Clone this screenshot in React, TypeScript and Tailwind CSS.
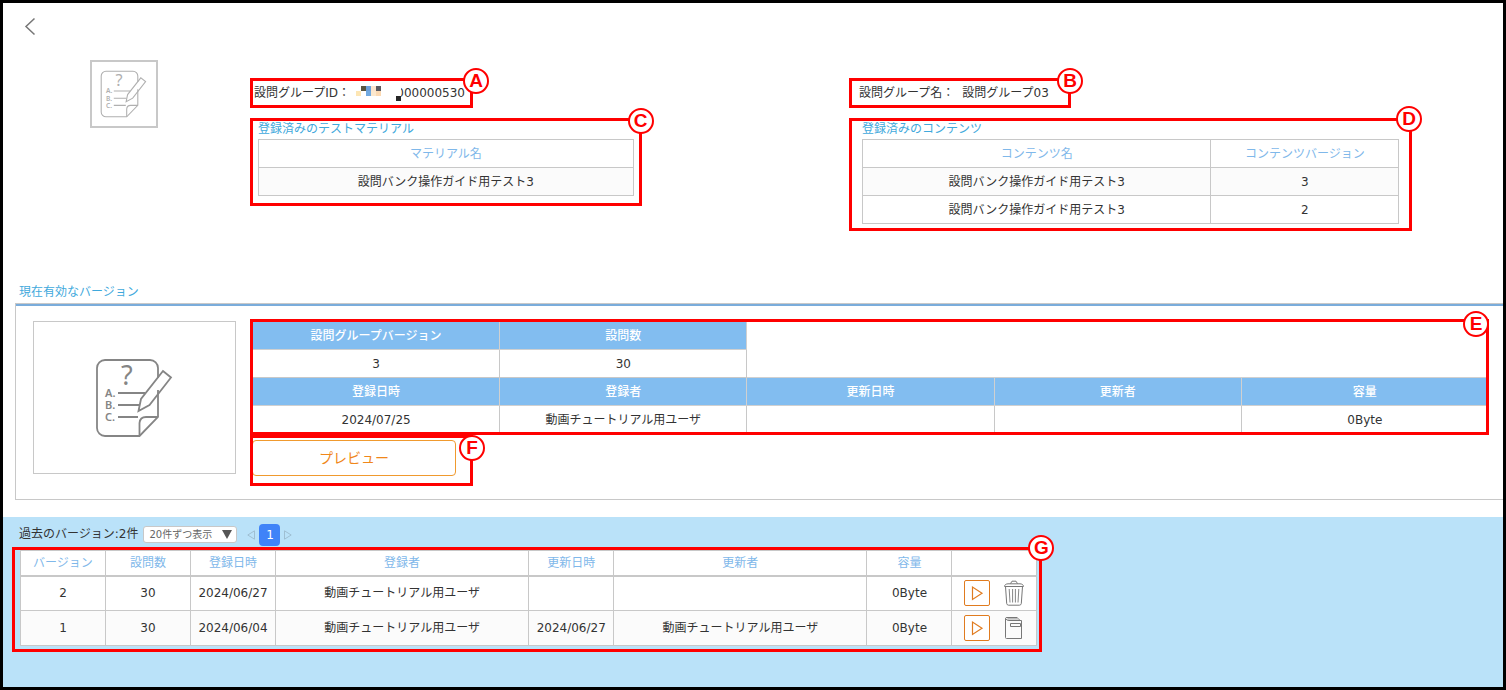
import type { ReactNode } from "react";

function Marked({ label, badge, className, children }: { label: string; badge: string; className: string; children: ReactNode }) {
  return (
    <div className={`relative ${className}`}>
      {children}
      <div className="pointer-events-none absolute inset-0 border-[3px] border-[#ff0000]" />
      <span
        className={`absolute flex h-[26px] w-[26px] items-center justify-center rounded-full border-2 border-[#ff0000] bg-white pb-0.5 font-['Liberation_Sans',sans-serif] text-[19px] leading-none font-bold text-[#ff0000] ${badge}`}
      >
        {label}
      </span>
    </div>
  );
}

function QuestionSheet({ className }: { className: string }) {
  return (
    <svg viewBox="0 0 80 80" className={`overflow-visible ${className}`} fill="none" stroke="currentColor" strokeWidth="1.8" aria-hidden="true">
      <path d="M63 20V10A8 8 0 0 0 55 2H10A8 8 0 0 0 2 10V70A8 8 0 0 0 10 78H44.500L63 59V32" />
      <path d="M44.500 78V65Q45 59 51 59H63" />
      <path d="M43.500 53L46 41L68 13L76 19.500L54.500 47Z" />
      <path d="M23 35H50M23 47H44M23 59H43" />
      <g fill="currentColor" stroke="none" fontFamily="Noto Sans, sans-serif">
        <text x="26" y="27" fontSize="27">?</text>
        <g fontSize="11" fontWeight="600">
          <text x="10" y="39">A.</text>
          <text x="10" y="51">B.</text>
          <text x="10" y="63">C.</text>
        </g>
      </g>
    </svg>
  );
}

function PlayButton({ version }: { version: string }) {
  return (
    <button type="button" aria-label={`バージョン${version}をプレビュー`} className="flex h-[26px] w-[26px] items-center justify-center rounded-[2px] border border-[#e07b1f] bg-white text-[#e07b1f]">
      <svg viewBox="0 0 24 24" className="h-6 w-6" fill="none" stroke="currentColor" strokeWidth="1.2" aria-hidden="true">
        <path d="M7.500 6V18.500L17 12.300Z" />
      </svg>
    </button>
  );
}

function TrashIcon() {
  return (
    <svg viewBox="0 0 20 26" className="h-[26px] w-5 text-[#777777]" fill="none" stroke="currentColor" strokeWidth="1" aria-hidden="true">
      <path d="M.6 6.500C.6 4.500 2 4 4 3.800H16C18 4 19.400 4.500 19.400 6.500Z" />
      <path d="M6.500 3.600L8 1.200H12L13.500 3.600" />
      <path d="M1.500 6.500L2.700 23.500Q3 25.200 4.600 25.200H15.400Q17 25.200 17.300 23.500L18.500 6.500" />
      <path d="M5.200 9L6 22.500M8.600 9V22.500M11.400 9V22.500M14.800 9L14 22.500" strokeWidth=".9" />
    </svg>
  );
}

function BookIcon() {
  return (
    <svg viewBox="0 0 20 26" className="h-[26px] w-5 text-[#777777]" fill="none" stroke="currentColor" strokeWidth="1" aria-hidden="true">
      <path d="M1.500 3.500V22.500Q1.500 23.500 2.500 23.500H17.500V5.500H5Q2.500 5.500 1.500 3.500Q1.500 2.500 3 2.500H13.500" />
      <path d="M3.500 3.900H15L15.500 5" strokeWidth=".8" />
      <path d="M6.500 8.500H16.500V11.500H6.500Z" />
    </svg>
  );
}

const linedTable = "w-full table-fixed border-collapse text-center";
const listHead = "h-[28px] border border-[#c8c8c8] bg-white p-0 font-normal text-[#7fb8ea]";
const listCell = "h-[28px] border border-[#c8c8c8] p-0";
const blueHead = "h-[28px] border border-[#d0d0d0] bg-[#82bdf0] p-0 font-medium text-white";
const plainCell = "h-[28px] border border-[#c8c8c8] bg-white p-0";
const pastHead = "h-[25px] border border-b-2 border-[#c8c8c8] bg-white p-0 font-normal text-[#7fb8ea]";

const pastVersions = [
  { version: "2", count: "30", created: "2024/06/27", creator: "動画チュートリアル用ユーザ", updated: "", updater: "", size: "0Byte" },
  { version: "1", count: "30", created: "2024/06/04", creator: "動画チュートリアル用ユーザ", updated: "2024/06/27", updater: "動画チュートリアル用ユーザ", size: "0Byte" },
];

export default function App() {
  return (
    <main className="flex min-h-screen flex-col border-[3px] border-black bg-white font-['DejaVu_Sans','Noto_Sans_CJK_JP',sans-serif] text-[12px] leading-[18px] text-[#333333]">
      <header className="flex h-[57px] px-5 pt-3">
        <button type="button" aria-label="戻る" className="h-6 w-4">
          <svg viewBox="0 0 16 24" className="h-6 w-4" fill="none" stroke="#777777" strokeWidth="1.5" aria-hidden="true">
            <path d="M11.500 3.500L3 11.500L11.500 19.500" />
          </svg>
        </button>
      </header>

      <section className="grid grid-cols-[247px_599fr_654fr]">
        <div className="pl-[87px]">
          <div className="flex h-[68px] w-[68px] items-center justify-center border-2 border-[#c8c8c8] text-[#b0b0b0]">
            <QuestionSheet className="h-12 w-12" />
          </div>
        </div>

        <div className="flex flex-col gap-[10px] pt-[18px]">
          <Marked label="A" badge="-top-2.5 -right-4" className="h-[30px] w-[223px] pt-1.5 pl-1">
            <div className="flex items-center whitespace-nowrap">
              <span>設問グループID：</span>
              <svg viewBox="0 0 46 16" className="relative z-10 -mr-[5px] ml-auto h-4 w-[46px] shrink-0" shapeRendering="crispEdges" aria-hidden="true">
                <path fill="#ffffff" d="M0 0H46V16H0Z" />
                <path fill="#5a563f" d="M6 1h5v5h-5Z" />
                <path fill="#6c9fd8" d="M11 1h5v5h-5Z" />
                <path fill="#fbe3cc" d="M16 1h5v5h-5Z" />
                <path fill="#5a5a60" d="M21 1h5v5h-5Z" />
                <path fill="#fde6b4" d="M1 6h5v5h-5Z" />
                <path fill="#71a9e0" d="M11 6h5v5h-5Z" />
                <path fill="#fbe8cf" d="M16 6h5v5h-5Z" />
                <path fill="#fbd9b3" d="M21 6h5v5h-5Z" />
                <path fill="#262626" d="M41 11h5v5h-5Z" />
              </svg>
              <span className="pr-2">000000530</span>
            </div>
          </Marked>
          <Marked label="C" badge="-top-2.5 -right-3" className="w-[65.4%] px-2 pt-[2px] pb-2.5">
            <h2 className="h-[19px] font-normal text-[#3fa9dc]">登録済みのテストマテリアル</h2>
            <table className={linedTable}>
              <thead>
                <tr><th className={listHead}>マテリアル名</th></tr>
              </thead>
              <tbody>
                <tr className="bg-[#fbfbfb]"><td className={listCell}>設問バンク操作ガイド用テスト3</td></tr>
              </tbody>
            </table>
          </Marked>
        </div>

        <div className="flex flex-col gap-[10px] pt-[18px]">
          <Marked label="B" badge="-top-2.5 -right-3" className="h-[30px] w-[222px] pt-1.5 pl-2.5">
            <div className="flex gap-2 whitespace-nowrap">
              <span>設問グループ名：</span>
              <span>設問グループ03</span>
            </div>
          </Marked>
          <Marked label="D" badge="-top-3 -right-2.5" className="w-[86.1%] px-[13px] pt-[2px] pb-[7px]">
            <h2 className="h-[19px] font-normal text-[#3fa9dc]">登録済みのコンテンツ</h2>
            <table className={linedTable}>
              <thead>
                <tr>
                  <th className={`${listHead} w-[65%]`}>コンテンツ名</th>
                  <th className={listHead}>コンテンツバージョン</th>
                </tr>
              </thead>
              <tbody>
                <tr className="bg-[#fbfbfb]">
                  <td className={listCell}>設問バンク操作ガイド用テスト3</td>
                  <td className={listCell}>3</td>
                </tr>
                <tr>
                  <td className={listCell}>設問バンク操作ガイド用テスト3</td>
                  <td className={listCell}>2</td>
                </tr>
              </tbody>
            </table>
          </Marked>
        </div>
      </section>

      <section className="mt-[52px]">
        <h2 className="pb-[2px] pl-4 font-normal text-[#3fa9dc]">現在有効なバージョン</h2>
        <div className="ml-3 border-t border-b border-l border-[#c8c8c8]">
          <div className="flex border-t-2 border-[#7aacdb] pt-[13px] pr-3.5 pb-[13px] pl-[17px]">
            <div className="mt-[2px] mr-3.5 flex h-[153px] w-[203px] shrink-0 items-center justify-center border border-[#c8c8c8] text-[#858585]">
              <QuestionSheet className="h-20 w-20" />
            </div>
            <div className="flex-1">
              <Marked label="E" badge="-top-2 right-0" className="h-[116px] pt-[2px] pl-[2px]">
                <table className={linedTable}>
                  <tbody>
                    <tr>
                      <th className={blueHead}>設問グループバージョン</th>
                      <th className={blueHead}>設問数</th>
                      <td colSpan={3} rowSpan={2} />
                    </tr>
                    <tr>
                      <td className={plainCell}>3</td>
                      <td className={plainCell}>30</td>
                    </tr>
                    <tr>
                      <th className={blueHead}>登録日時</th>
                      <th className={blueHead}>登録者</th>
                      <th className={blueHead}>更新日時</th>
                      <th className={blueHead}>更新者</th>
                      <th className={blueHead}>容量</th>
                    </tr>
                    <tr>
                      <td className={plainCell}>2024/07/25</td>
                      <td className={plainCell}>動画チュートリアル用ユーザ</td>
                      <td className={plainCell} />
                      <td className={plainCell} />
                      <td className={plainCell}>0Byte</td>
                    </tr>
                  </tbody>
                </table>
              </Marked>
              <Marked label="F" badge="top-0 -right-3" className="h-[51px] w-[223px] pt-[5px] pl-[2px]">
                <button type="button" className="h-9 w-[204px] rounded-[4px] border border-[#f09a2e] bg-white text-[14px] text-[#f0871a]">
                  プレビュー
                </button>
              </Marked>
            </div>
          </div>
        </div>
      </section>

      <section className="mt-[17px] flex-1 bg-[#bae2f9]">
        <div className="flex h-[30px] items-center pt-[5px] pl-4">
          <label htmlFor="page-size" className="mr-[5px] pb-[2px]">過去のバージョン:2件</label>
          <div className="relative mr-2.5 flex">
            <select id="page-size" defaultValue="20" className="h-[17px] w-[94px] appearance-none rounded-[3px] border border-[#c8c8c8] bg-white pl-[5px] text-[10px] leading-[15px] text-[#666666]">
              <option value="20">20件ずつ表示</option>
              <option value="50">50件ずつ表示</option>
            </select>
            <svg viewBox="0 0 10 9" className="pointer-events-none absolute top-1 right-[5px] h-[9px] w-2.5" fill="#555555" aria-hidden="true">
              <path d="M0 0H10L5 9Z" />
            </svg>
          </div>
          <nav aria-label="ページ" className="flex items-center gap-1">
            <button type="button" aria-label="前へ">
              <svg viewBox="0 0 8 10" className="h-2.5 w-2" fill="none" stroke="#9fbfd2" aria-hidden="true">
                <path d="M7.500 .8V9.200L.8 5Z" />
              </svg>
            </button>
            <button type="button" aria-current="page" className="h-[22px] w-[21px] rounded-[4px] bg-[#3f83f8] text-white">1</button>
            <button type="button" aria-label="次へ">
              <svg viewBox="0 0 8 10" className="h-2.5 w-2" fill="none" stroke="#9fbfd2" aria-hidden="true">
                <path d="M.5 .8V9.200L7.200 5Z" />
              </svg>
            </button>
          </nav>
        </div>
        <Marked label="G" badge="-top-3 -right-3" className="ml-[9px] w-[68.7%] pt-[3px] pr-[5px] pb-[6px] pl-2">
          <table className={linedTable}>
            <colgroup>
              <col className="w-[85px]" />
              <col className="w-[85px]" />
              <col className="w-[85px]" />
              <col />
              <col className="w-[85px]" />
              <col />
              <col className="w-[85px]" />
              <col className="w-[85px]" />
            </colgroup>
            <thead>
              <tr>
                {["バージョン", "設問数", "登録日時", "登録者", "更新日時", "更新者", "容量", ""].map((name) => (
                  <th key={name} className={pastHead}>{name}</th>
                ))}
              </tr>
            </thead>
            <tbody>
              {pastVersions.map((row, index) => (
                <tr key={row.version} className={index % 2 ? "bg-[#fbfbfb]" : "bg-white"}>
                  {[row.version, row.count, row.created, row.creator, row.updated, row.updater, row.size].map((value, column) => (
                    <td key={column} className="h-[35px] border border-[#c8c8c8] p-0">{value}</td>
                  ))}
                  <td className="h-[35px] border border-[#c8c8c8] p-0">
                    <div className="flex items-center justify-center gap-3.5">
                      <PlayButton version={row.version} />
                      <button type="button" aria-label={index ? "アーカイブ" : "削除"}>{index ? <BookIcon /> : <TrashIcon />}</button>
                    </div>
                  </td>
                </tr>
              ))}
            </tbody>
          </table>
        </Marked>
      </section>
    </main>
  );
}
